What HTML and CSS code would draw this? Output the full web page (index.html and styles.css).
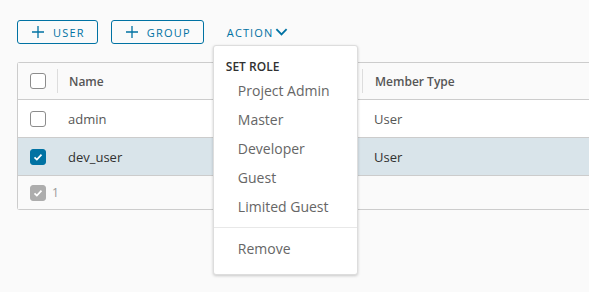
FILE: index.html
```html
<!DOCTYPE html>
<html lang="en">

<head>
    <meta charset="UTF-8">
    <meta name="viewport" content="width=device-width, initial-scale=1.0">
    <title>Members</title>
    <link rel="stylesheet" href="styles.css">
</head>

<body>
    <!-- Toolbar -->
    <div class="toolbar">
        <button class="btn-outline">
            <svg class="plus" viewBox="0 0 12 12"><path d="M6 0v12M0 6h12" /></svg>
            User
        </button>
        <button class="btn-outline">
            <svg class="plus" viewBox="0 0 12 12"><path d="M6 0v12M0 6h12" /></svg>
            Group
        </button>
        <div class="action-wrap">
            <button class="btn-link">
                Action
                <svg class="chevron" viewBox="0 0 14 10"><path d="M1.5 2l5.5 5.5L12.5 2" /></svg>
            </button>

            <!-- Action dropdown -->
            <div class="dropdown">
                <div class="dropdown-header">Set Role</div>
                <div class="dropdown-item">Project Admin</div>
                <div class="dropdown-item">Master</div>
                <div class="dropdown-item">Developer</div>
                <div class="dropdown-item">Guest</div>
                <div class="dropdown-item">Limited Guest</div>
                <div class="dropdown-divider"></div>
                <div class="dropdown-item">Remove</div>
            </div>
        </div>
    </div>

    <!-- Member grid -->
    <div class="datagrid">
        <div class="row head">
            <div class="cell check-cell"><span class="checkbox"></span></div>
            <div class="cell name-cell">Name</div>
            <div class="cell type-cell">Member Type</div>
        </div>
        <div class="row">
            <div class="cell check-cell"><span class="checkbox"></span></div>
            <div class="cell name-cell">admin</div>
            <div class="cell type-cell">User</div>
        </div>
        <div class="row selected">
            <div class="cell check-cell">
                <span class="checkbox checked">
                    <svg viewBox="0 0 16 16"><path d="M4 8.3l2.7 2.6L12 5.4" /></svg>
                </span>
            </div>
            <div class="cell name-cell">dev_user</div>
            <div class="cell type-cell">User</div>
        </div>
        <div class="footer">
            <span class="checkbox muted">
                <svg viewBox="0 0 16 16"><path d="M4 8.3l2.7 2.6L12 5.4" /></svg>
            </span>
            <span class="count">1</span>
        </div>
    </div>
</body>

</html>
```

FILE: styles.css
```css
html {
    height: 100%;
}

body {
    box-sizing: border-box;
    min-height: 100%;
    margin: 0;
    padding: 20px 0 0 17px;
    background-color: #fafafa;
    font-family: 'Open Sans', sans-serif;
    color: #565656;
}

.toolbar {
    display: flex;
    align-items: center;
    height: 24px;
}

.btn-outline {
    display: flex;
    align-items: center;
    height: 24px;
    margin-right: 13px;
    padding: 0 12px 0 14px;
    background: transparent;
    border: 1px solid #0072a3;
    border-radius: 3px;
    color: #0072a3;
    font-family: inherit;
    font-size: 11px;
    font-weight: 500;
    letter-spacing: 0.11em;
    text-transform: uppercase;
}

.plus {
    width: 12px;
    height: 12px;
    margin-right: 9px;
    fill: none;
    stroke: #0072a3;
    stroke-width: 1.3;
}

.action-wrap {
    position: relative;
    margin-left: -2px;
}

.btn-link {
    display: flex;
    align-items: center;
    height: 24px;
    padding: 0 12px;
    background: transparent;
    border: none;
    color: #0072a3;
    font-family: inherit;
    font-size: 11px;
    font-weight: 500;
    letter-spacing: 0.1em;
    text-transform: uppercase;
}

.chevron {
    width: 13px;
    height: 10px;
    margin-left: 2px;
    fill: none;
    stroke: #0072a3;
    stroke-width: 2;
}

.dropdown {
    position: absolute;
    top: 25px;
    left: -2px;
    z-index: 2;
    width: 143px;
    padding: 12px 0 11px;
    background: #fff;
    border: 1px solid #ddd;
    border-radius: 3px;
    box-shadow: 0 1px 3px rgba(0, 0, 0, 0.2);
}

.dropdown-header {
    padding-left: 12px;
    line-height: 18px;
    color: #313131;
    font-size: 12px;
    font-weight: 600;
    text-transform: uppercase;
}

.dropdown-item {
    padding-left: 24px;
    line-height: 29px;
    font-size: 14px;
    color: #666;
}

.dropdown-divider {
    height: 1px;
    margin: 6px 0 6px;
    background: #e8e8e8;
}

.datagrid {
    margin-top: 18px;
    border: 1px solid #ccc;
    border-right: none;
    border-radius: 3px 0 0 3px;
    background: #fff;
}

.row {
    display: flex;
    height: 37px;
    border-bottom: 1px solid #ccc;
    font-size: 13px;
    color: #565656;
}

.row.head {
    height: 36px;
    background: #fafafa;
    font-size: 12px;
    font-weight: 600;
}

.row.selected {
    background: #d9e4ea;
    color: #313131;
}

.cell {
    display: flex;
    align-items: center;
}

.check-cell {
    width: 39px;
    padding-left: 12px;
    box-sizing: border-box;
}

.name-cell {
    width: 305px;
    padding-left: 11px;
    box-sizing: border-box;
}

.type-cell {
    padding-left: 12px;
}

.head .name-cell,
.head .type-cell {
    border-left: 1px solid #ddd;
    height: 24px;
    align-self: center;
}

.checkbox {
    display: flex;
    align-items: center;
    justify-content: center;
    width: 16px;
    height: 16px;
    box-sizing: border-box;
    border: 1px solid #8c8c8c;
    border-radius: 3px;
    background: #fff;
}

.checkbox svg {
    width: 16px;
    height: 16px;
    fill: none;
    stroke: #fff;
    stroke-width: 2;
}

.checkbox.checked {
    background: #0072a3;
    border-color: #0072a3;
}

.checkbox.muted {
    background: #adadad;
    border-color: #adadad;
}

.footer {
    display: flex;
    align-items: center;
    height: 33px;
    padding-left: 12px;
    background: #fafafa;
    font-size: 12px;
    color: #999;
}

.count {
    margin-left: 6px;
}
```
